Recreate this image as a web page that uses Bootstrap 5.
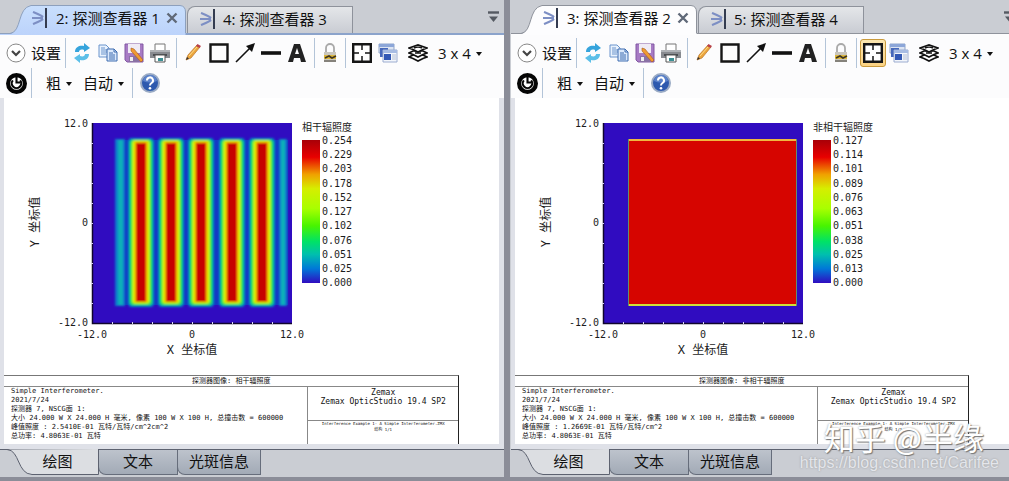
<!DOCTYPE html>
<html lang="zh-CN">
<head>
<meta charset="utf-8">
<meta name="viewport" content="width=device-width, initial-scale=1">
<title>探测查看器</title>
<link href="https://cdn.jsdelivr.net/npm/bootstrap@5.3.0/dist/css/bootstrap.min.css" rel="stylesheet">
<style>
body{background:#8b8d98;color:#111;font-family:"Open Sans","Noto Sans CJK SC",sans-serif;font-size:15px;line-height:20px}
.workspace{display:grid;grid-template-columns:504fr 499fr;gap:6px;min-height:100vh;padding-bottom:4px}
.viewer{background:#dfe1e8;min-width:0;overflow:hidden}
.viewer-right{border-left:1px solid #cacdd3}
button{background:none;border:0;padding:0;color:inherit;white-space:nowrap}
.tabstrip{height:35px;background:#cacdd3;border-bottom:1px solid #8f939c;padding-left:10px}
.viewer-left .tabstrip{border-bottom:2px solid #8ba3cb}
.viewer-right .tabstrip{margin-right:-6px;height:34px}
.viewer-right .tools{padding-top:1px}
.toptab{position:relative;height:27px;padding-left:22px;padding-bottom:2px}
.toptab.active{width:176px;height:28px}
.toptab.active .tabshape{position:absolute;left:-10px;top:0}
.toptab>*{position:relative}
.toptab.other{width:166px;margin-left:1px;padding-left:12px;border:1px solid #8e929b;border-bottom:0;border-radius:8px 0 0 0;background:linear-gradient(#e4e6e9,#c9ccd3)}
.tabname{margin-left:7px}
.closer{margin-left:6px;width:12px;height:20px}
.overflow-btn{margin-right:5px;margin-bottom:10px}
.tools{background:#fcfcfd}
.toolrow{height:35px;padding-left:6px}
.toolrow.second{height:28px;padding-bottom:2px}
.tool{width:26px;height:28px;border:1px solid transparent;border-radius:3px;flex:none}
.tool.lock{width:24px}
.tool.on{background:linear-gradient(#fbe6b0,#fbd283);border-color:#c99a3c}
.sep{width:1px;height:30px;background:#b3c4d8;margin:0 3px;flex:none}
.lbl{margin-left:5px}
.menu-btn{margin-left:7px}
.weight-btn{margin-left:11px}
.arrow{display:inline-block;border:3px solid transparent;border-top:4px solid #111;border-bottom:0;margin-left:5px;vertical-align:3px}
.sheet{background:#fff;margin:0 5px 5px 4px;display:flex;flex-direction:column;justify-content:space-between}
.viewer-right .sheet{margin-right:0}
.chart text{font-family:"DejaVu Sans Mono","Noto Sans CJK SC",monospace;font-size:10px;fill:#1c1c1c}
.chart .axisname{font-size:12px}
.chart .end{text-anchor:end}
.chart .mid{text-anchor:middle}
.titleblock{width:92%;border-top:1px solid #777;border-right:1px solid #222;font:7px/9px "DejaVu Sans Mono","Noto Sans CJK SC",monospace;color:#111;white-space:nowrap}
.tb-title{text-align:center;height:11px;line-height:10px;border-bottom:1px solid #888}
.tb-cols{display:grid;grid-template-columns:2fr 1fr;height:57px}
.tb-left{padding-left:7px;overflow:hidden}
.tb-right{border-left:1px solid #888;text-align:center}
.tb-product{height:34px;font-size:8px;border-bottom:1px solid #888;padding-top:1px}
.tb-file{font-size:4px;line-height:6px}
.bottomtabs{height:28px;background:#cacdd3;border-top:1px solid #5d6270}
.bt{height:25px;border:1px solid #666d7b;border-top:0;border-radius:0 0 0 8px;background:linear-gradient(#bdc3cc,#a2aab6);width:80px;margin-left:-1px}
.bt.wide{width:84px}
.bt.active{position:relative;background:none;border:0;width:99px;margin:-1px 0 0;height:26px;padding-left:16px}
.bt.active svg{position:absolute;left:0;top:0}
.bt span{position:relative;top:-1px}
.watermark{position:absolute;right:10px;bottom:9px;text-align:right;color:#fff;pointer-events:none}
.wm-name{font:31px/34px "Noto Sans CJK SC",sans-serif;padding-right:15px;text-shadow:1px 1px 1px #777,0 0 2px #999}
.wm-url{font:16px/18px "Liberation Sans",sans-serif;color:#e4e6eb;text-shadow:0 0 2px #999}
</style>
</head>
<body>
<svg width="0" height="0" class="position-absolute" aria-hidden="true">
<defs>
<linearGradient id="blueTab" x2="0" y2="1"><stop stop-color="#c9dffd"/><stop offset="1" stop-color="#bcd3fb"/></linearGradient>
<linearGradient id="scale" x2="0" y2="1"><stop stop-color="#a80008"/><stop offset=".12" stop-color="#e80000"/><stop offset=".24" stop-color="#f0a000"/><stop offset=".34" stop-color="#d6ee00"/><stop offset=".48" stop-color="#a8ff00"/><stop offset=".6" stop-color="#48f400"/><stop offset=".71" stop-color="#00e266"/><stop offset=".8" stop-color="#00bfae"/><stop offset=".9" stop-color="#0078d8"/><stop offset="1" stop-color="#300cc0"/></linearGradient>
<filter id="soft" x="-10%" y="-3%" width="120%" height="106%"><feGaussianBlur stdDeviation=".8"/></filter>
<symbol id="detector" viewBox="0 0 16 20"><path d="M1 4C6 6 9 7 11 9M0 10H11M1 16C6 14 9 13 11 11" fill="none" stroke="#7d8fc4" stroke-width="2"/><path d="M14 0V20" stroke="#343c50" stroke-width="2"/></symbol>
<symbol id="chev" viewBox="0 0 20 20"><circle cx="10" cy="10" r="9" fill="#fff" stroke="#888"/><path d="M6 8l4 4 4-4" fill="none" stroke="#444" stroke-width="2.2"/></symbol>
<symbol id="refresh" viewBox="0 0 20 20"><path d="M3 9C3 3 9 2 12 3V0l6 5-6 4V7C9 6 7 7 7 9z" fill="#36a4dc"/><path d="M17 11c0 6-6 7-9 6v3l-6-5 6-4v2c3 1 5 0 5-2z" fill="#5cbfe8"/></symbol>
<symbol id="copy" viewBox="0 0 20 20"><path d="M1 2h7l3 3v9H1z" fill="#e9f2fd" stroke="#6a94cc"/><path d="M3 5h4M3 7h6M3 9h6M3 11h5" stroke="#6a94cc"/><path d="M9 6h7l3 3v9H9z" fill="#dbe9fb" stroke="#3f6db0"/><path d="M16 6v3h3M11 10h4M11 12h6M11 14h6M11 16h6" fill="none" stroke="#3f6db0"/></symbol>
<symbol id="save" viewBox="0 0 20 20"><path d="M1 1h18v18H3l-2-2z" fill="#a77bc4" stroke="#8259a3"/><path d="M4 1h12v9H4z" fill="#f0ebf5"/><path d="M5 13h10v6H5z" fill="#8a72a5"/><path d="M6 14h3v4H6z" fill="#eee"/><path d="M7 5l3 1 9 11-2 2L7 8z" fill="#ef9b31" stroke="#a85a1a" stroke-width=".6"/></symbol>
<symbol id="printer" viewBox="0 0 20 20"><path d="M5 1h10v7H5z" fill="#fff" stroke="#777"/><path d="M0 7h20v8H0z" fill="#888b90"/><path d="M0 7h20v2H0z" fill="#b0b3b7"/><path d="M3 11h14v2H3z" fill="#4b4e53"/><path d="M5 12h10v7H5z" fill="#fff" stroke="#555"/><path d="M8 15h5v3H8z" fill="#3b8f94"/></symbol>
<symbol id="pencil" viewBox="0 0 20 20"><path d="M3 17l2-5L14 2l3 2-9 11z" fill="#eba63d" stroke="#b9732a" stroke-width=".7"/><path d="M13 3l1.500-2 3.500 2-1.500 2z" fill="#b8424c"/><path d="M3 17l1-3 2 1.500z" fill="#333"/><path d="M6 13l8-9" stroke="#ffdc8c"/></symbol>
<symbol id="box" viewBox="0 0 20 20"><path d="M1.500 1.500h17v17h-17z" fill="none" stroke="#151515" stroke-width="2.400"/></symbol>
<symbol id="arrowic" viewBox="0 0 20 20"><path d="M1 19L16 4" stroke="#111" stroke-width="1.600"/><path d="M20 0l-3 9-6-6z" fill="#111"/></symbol>
<symbol id="lineic" viewBox="0 0 20 20"><path d="M0 10h20" stroke="#111" stroke-width="3.600"/></symbol>
<symbol id="bold" viewBox="0 0 20 20"><path d="M1 19L7 1h6l6 18h-5l-1-4H7l-1 4zM8 11h4L10 5z" fill="#222" fill-rule="evenodd"/></symbol>
<symbol id="lockic" viewBox="0 0 20 20"><path d="M6 11V5a4 4 0 0 1 8 0v6" fill="none" stroke="#a9a9a9" stroke-width="1.800"/><path d="M4 9h12v10H4z" fill="#c9c6bd"/><path d="M4 12h12v4H4z" fill="#ddb83d"/><path d="M5 15l4-2 3 2 4-2" fill="none" stroke="#3d3420" stroke-width="1.600"/><path d="M4 18h12" stroke="#85827b" stroke-width="2"/></symbol>
<symbol id="target" viewBox="0 0 20 20"><path d="M1.200 1.200h17.600v17.600H1.200z" fill="#fff" stroke="#151515" stroke-width="2.400"/><path d="M10 2v5M10 13v5M2 10h5M13 10h5" stroke="#151515" stroke-width="1.500"/></symbol>
<symbol id="windows" viewBox="0 0 20 20"><path d="M1 1h15v9H1z" fill="#dce4f2" stroke="#8fa4c8"/><path d="M1 1h15v3H1z" fill="#8ca6d8"/><path d="M2 5h8v9H2z" fill="#4668bb"/><path d="M5 7h14v12H5z" fill="#f3f6fb" stroke="#9bacd0"/><path d="M5 7h14v3H5z" fill="#a7bce3"/><path d="M6 11h7v6H6z" fill="#3359b5"/><path d="M14 12h4M14 14h4M14 16h4" stroke="#b4bfd4"/></symbol>
<symbol id="layers" viewBox="0 0 20 20"><g fill="#fff" stroke="#111" stroke-width="1.700"><path d="M1 14l4-2h10l4 2-4 1.500L10 18l-5-2.500z"/><path d="M1 10l4-2h10l4 2-4 1.500L10 14l-5-2.500z"/><path d="M1 5l9-3 9 3-4 1.500L10 9 5 6.500z"/><path d="M6 5c2-1 6-1 8 0M7 10h6"/></g></symbol>
<symbol id="cycle" viewBox="0 0 20 20"><circle cx="10" cy="10" r="8" fill="#fff" stroke="#050505" stroke-width="4"/><path d="M6.500 7a4.500 4.500 0 1 0 7 0" fill="none" stroke="#050505" stroke-width="2"/><path d="M10 2v8M10 9h4" stroke="#050505" stroke-width="2"/></symbol>
<symbol id="help" viewBox="0 0 20 20"><circle cx="10" cy="10" r="9" fill="#2d59ae" stroke="#9aabc5" stroke-width="2"/><path d="M3 8a7 6 0 0 1 14 0q-7 3-14 0z" fill="#799fdd" opacity=".6"/><path d="M7 7.500a3 3 0 1 1 4.500 2.500Q10 11 10 12.500" fill="none" stroke="#fff" stroke-width="2"/><circle cx="10" cy="15.300" r="1.300" fill="#fff"/></symbol>
<symbol id="more" viewBox="0 0 11 12"><path d="M0 1.500h11" stroke="#555a62" stroke-width="2.400"/><path d="M1 5.500h9L5.500 11z" fill="#555a62"/></symbol>
<symbol id="cross" viewBox="0 0 12 12"><path d="M1.500 1.500l9 9m0-9l-9 9" stroke="#606978" stroke-width="2.400"/></symbol>
<g id="fringe"><rect x="-13" y="40" width="26" height="169" rx="4" fill="#0878cc"/><rect x="-12" y="41" width="24" height="167" rx="4" fill="#00b8a0"/><rect x="-11" y="42" width="22" height="165" rx="4" fill="#18e050"/><rect x="-9" y="42" width="18" height="164" rx="3" fill="#90f800"/><rect x="-8" y="43" width="16" height="162" rx="2" fill="#e0f000"/><rect x="-6" y="44" width="12" height="160" fill="#f09000"/><rect x="-5" y="45" width="10" height="159" fill="#de2000"/><rect x="-4" y="45" width="8" height="158" fill="#c60000"/></g>
<g id="axes"><path d="M88.500 25V225.500H288" fill="none" stroke="#10052e" stroke-width="1.500"/><path d="M108.500 224v2m20-2v2m20-2v2m20-2v2m20-2v2m20-2v2m20-2v2m20-2v2m20-2v2M87 45.500h2m-2 20h2m-2 20h2m-2 20h2m-2 20h2m-2 20h2m-2 20h2m-2 20h2m-2 20h2" stroke="#d8d4f0"/></g>
<symbol id="slant" viewBox="0 0 99 26"><path d="M0 .5H7C20 1 17 25 32 25.500H98.500V0" fill="#dcdee2"/><path d="M0 .5H7C20 1 17 25 32 25.500H98.500V0" fill="none" stroke="#5d6270"/></symbol>
</defs>
</svg>

<main class="workspace">
<section class="viewer viewer-left d-flex flex-column">
  <nav class="tabstrip d-flex align-items-end" aria-label="查看器">
    <div class="toptab active d-flex align-items-center">
      <svg class="tabshape" width="186" height="30"><path d="M0 29H10C22 27 17 3 31 .5H180Q185.500 1 185.500 7V30H0z" fill="url(#blueTab)"/><path d="M0 28.500H10C22 27 17 3 31 .5H180Q185.500 1 185.500 7V28" fill="none" stroke="#8da0bd"/></svg>
      <svg width="16" height="20"><use href="#detector"/></svg><button class="tabname ms-2">2: 探测查看器 1</button><button class="closer d-flex align-items-center" aria-label="关闭"><svg width="12" height="12"><use href="#cross"/></svg></button>
    </div>
    <div class="toptab other d-flex align-items-center"><svg width="16" height="20"><use href="#detector"/></svg><button class="tabname">4: 探测查看器 3</button></div>
    <button class="overflow-btn ms-auto d-flex" aria-label="更多"><svg width="11" height="12"><use href="#more"/></svg></button>
  </nav>
  <div class="tools">
    <div class="toolrow d-flex align-items-center">
      <button class="d-flex align-items-center"><svg width="20" height="20"><use href="#chev"/></svg><span class="lbl">设置</span></button>
      <i class="sep ms-1"></i>
      <button class="tool" aria-label="刷新"><svg width="20" height="20"><use href="#refresh"/></svg></button><button class="tool" aria-label="复制"><svg width="20" height="20"><use href="#copy"/></svg></button><button class="tool" aria-label="保存"><svg width="20" height="20"><use href="#save"/></svg></button><button class="tool" aria-label="打印"><svg width="20" height="20"><use href="#printer"/></svg></button>
      <i class="sep"></i>
      <button class="tool" aria-label="铅笔"><svg width="20" height="20"><use href="#pencil"/></svg></button><button class="tool" aria-label="矩形"><svg width="20" height="20"><use href="#box"/></svg></button><button class="tool" aria-label="箭头"><svg width="20" height="20"><use href="#arrowic"/></svg></button><button class="tool" aria-label="直线"><svg width="20" height="20"><use href="#lineic"/></svg></button><button class="tool" aria-label="文字"><svg width="20" height="20"><use href="#bold"/></svg></button>
      <i class="sep ms-1"></i>
      <button class="tool lock" aria-label="锁定"><svg width="20" height="20"><use href="#lockic"/></svg></button>
      <i class="sep"></i>
      <button class="tool" aria-label="适合窗口"><svg width="20" height="20"><use href="#target"/></svg></button><button class="tool" aria-label="窗口"><svg width="20" height="20"><use href="#windows"/></svg></button><button class="tool ms-1" aria-label="图层"><svg width="20" height="20"><use href="#layers"/></svg></button>
      <button class="menu-btn">3 x 4<i class="arrow"></i></button>
    </div>
    <div class="toolrow second d-flex align-items-center">
      <button class="d-flex" aria-label="自动更新"><svg width="21" height="21"><use href="#cycle"/></svg></button>
      <i class="sep ms-1"></i>
      <button class="weight-btn">粗<i class="arrow"></i></button><button class="weight-btn">自动<i class="arrow"></i></button>
      <i class="sep ms-2"></i>
      <button class="d-flex ms-1" aria-label="帮助"><svg width="20" height="20"><use href="#help"/></svg></button>
    </div>
  </div>
  <div class="sheet flex-grow-1">
    <svg class="chart" width="400" height="270" role="img" aria-label="相干辐照度">
      <rect x="88" y="25" width="200" height="200" fill="#300cc0"/>
      <rect x="112" y="42" width="172" height="165" fill="#1438c4"/>
      <g filter="url(#soft)"><rect x="111" y="41" width="10" height="167" fill="#0878cc"/><rect x="114" y="42" width="5" height="165" fill="#08b0b8"/><rect x="275" y="41" width="8" height="167" fill="#0878cc"/><rect x="277" y="42" width="4" height="165" fill="#08b0b8"/>
      <use href="#fringe" x="137"/><use href="#fringe" x="167"/><use href="#fringe" x="197"/><use href="#fringe" x="228"/><use href="#fringe" x="258"/></g>
      <use href="#axes"/>
      <rect x="298" y="42" width="18" height="143" fill="url(#scale)"/>
      <text class="end" x="84" y="29">12.0</text><text class="end" x="84" y="128">0</text><text class="end" x="84" y="228">-12.0</text>
      <text class="mid" x="88" y="240">-12.0</text><text class="mid" x="188" y="240">0</text><text class="mid" x="288" y="240">12.0</text>
      <text class="axisname mid" x="188" y="256">X 坐标值</text><text class="axisname mid" transform="translate(35 124) rotate(-90)">Y 坐标值</text>
      <text x="298" y="33">相干辐照度</text>
      <text x="318" y="46">0.254</text><text x="318" y="60">0.229</text><text x="318" y="74">0.203</text><text x="318" y="89">0.178</text><text x="318" y="103">0.152</text><text x="318" y="117">0.127</text><text x="318" y="131">0.102</text><text x="318" y="146">0.076</text><text x="318" y="160">0.051</text><text x="318" y="174">0.025</text><text x="318" y="188">0.000</text>
    </svg>
    <div class="titleblock">
      <div class="tb-title">探测器图像: 相干辐照度</div>
      <div class="tb-cols">
        <div class="tb-left"><div>Simple Interferometer.</div><div>2021/7/24</div><div>探测器 7, NSCG面 1:</div><div>大小 24.000 W X 24.000 H 毫米, 像素 100 W X 100 H, 总撞击数 = 600000</div><div>峰值照度 : 2.5410E-01 瓦特/瓦特/cm^2cm^2</div><div>总功率: 4.8063E-01 瓦特</div></div>
        <div class="tb-right"><div class="tb-product"><div>Zemax</div><div>Zemax OpticStudio 19.4 SP2</div></div><div class="tb-file"><div>Interference Example 1- A Simple Interferometer.ZMX</div><div>结构 1/1</div></div></div>
      </div>
    </div>
  </div>
  <nav class="bottomtabs d-flex" aria-label="视图"><button class="bt active"><svg width="99" height="26"><use href="#slant"/></svg><span>绘图</span></button><button class="bt"><span>文本</span></button><button class="bt wide"><span>光斑信息</span></button></nav>
</section>

<section class="viewer viewer-right d-flex flex-column">
  <nav class="tabstrip d-flex align-items-end" aria-label="查看器">
    <div class="toptab active d-flex align-items-center">
      <svg class="tabshape" width="186" height="30"><path d="M0 29H10C22 27 17 3 31 .5H180Q185.500 1 185.500 7V30H0z" fill="#fdfdfe"/><path d="M0 28.500H10C22 27 17 3 31 .5H180Q185.500 1 185.500 7V28" fill="none" stroke="#8e929b"/></svg>
      <svg width="16" height="20"><use href="#detector"/></svg><button class="tabname ms-2">3: 探测查看器 2</button><button class="closer d-flex align-items-center" aria-label="关闭"><svg width="12" height="12"><use href="#cross"/></svg></button>
    </div>
    <div class="toptab other d-flex align-items-center"><svg width="16" height="20"><use href="#detector"/></svg><button class="tabname">5: 探测查看器 4</button></div>
    <button class="overflow-btn me-0 ms-auto d-flex" aria-label="更多"><svg width="11" height="12"><use href="#more"/></svg></button>
  </nav>
  <div class="tools">
    <div class="toolrow d-flex align-items-center">
      <button class="d-flex align-items-center"><svg width="20" height="20"><use href="#chev"/></svg><span class="lbl">设置</span></button>
      <i class="sep ms-1"></i>
      <button class="tool" aria-label="刷新"><svg width="20" height="20"><use href="#refresh"/></svg></button><button class="tool" aria-label="复制"><svg width="20" height="20"><use href="#copy"/></svg></button><button class="tool" aria-label="保存"><svg width="20" height="20"><use href="#save"/></svg></button><button class="tool" aria-label="打印"><svg width="20" height="20"><use href="#printer"/></svg></button>
      <i class="sep"></i>
      <button class="tool" aria-label="铅笔"><svg width="20" height="20"><use href="#pencil"/></svg></button><button class="tool" aria-label="矩形"><svg width="20" height="20"><use href="#box"/></svg></button><button class="tool" aria-label="箭头"><svg width="20" height="20"><use href="#arrowic"/></svg></button><button class="tool" aria-label="直线"><svg width="20" height="20"><use href="#lineic"/></svg></button><button class="tool" aria-label="文字"><svg width="20" height="20"><use href="#bold"/></svg></button>
      <i class="sep ms-1"></i>
      <button class="tool lock" aria-label="锁定"><svg width="20" height="20"><use href="#lockic"/></svg></button>
      <i class="sep"></i>
      <button class="tool on" aria-label="适合窗口" aria-pressed="true"><svg width="20" height="20"><use href="#target"/></svg></button><button class="tool" aria-label="窗口"><svg width="20" height="20"><use href="#windows"/></svg></button><button class="tool ms-1" aria-label="图层"><svg width="20" height="20"><use href="#layers"/></svg></button>
      <button class="menu-btn">3 x 4<i class="arrow"></i></button>
    </div>
    <div class="toolrow second d-flex align-items-center">
      <button class="d-flex" aria-label="自动更新"><svg width="21" height="21"><use href="#cycle"/></svg></button>
      <i class="sep ms-1"></i>
      <button class="weight-btn">粗<i class="arrow"></i></button><button class="weight-btn">自动<i class="arrow"></i></button>
      <i class="sep ms-2"></i>
      <button class="d-flex ms-1" aria-label="帮助"><svg width="20" height="20"><use href="#help"/></svg></button>
    </div>
  </div>
  <div class="sheet flex-grow-1">
    <svg class="chart" width="400" height="270" role="img" aria-label="非相干辐照度">
      <rect x="88" y="25" width="200" height="200" fill="#300cc0"/>
      <rect x="113" y="41" width="169" height="167" fill="#648c70"/>
      <rect x="114" y="41" width="167" height="2" fill="#f0b840"/><rect x="114" y="206" width="167" height="2" fill="#d0e038"/>
      <rect x="114" y="43" width="167" height="163" fill="#d60500"/>
      <use href="#axes"/>
      <rect x="298" y="42" width="18" height="143" fill="url(#scale)"/>
      <text class="end" x="84" y="29">12.0</text><text class="end" x="84" y="128">0</text><text class="end" x="84" y="228">-12.0</text>
      <text class="mid" x="88" y="240">-12.0</text><text class="mid" x="188" y="240">0</text><text class="mid" x="288" y="240">12.0</text>
      <text class="axisname mid" x="188" y="256">X 坐标值</text><text class="axisname mid" transform="translate(35 124) rotate(-90)">Y 坐标值</text>
      <text x="298" y="33">非相干辐照度</text>
      <text x="318" y="46">0.127</text><text x="318" y="60">0.114</text><text x="318" y="74">0.101</text><text x="318" y="89">0.089</text><text x="318" y="103">0.076</text><text x="318" y="117">0.063</text><text x="318" y="131">0.051</text><text x="318" y="146">0.038</text><text x="318" y="160">0.025</text><text x="318" y="174">0.013</text><text x="318" y="188">0.000</text>
    </svg>
    <div class="titleblock">
      <div class="tb-title">探测器图像: 非相干辐照度</div>
      <div class="tb-cols">
        <div class="tb-left"><div>Simple Interferometer.</div><div>2021/7/24</div><div>探测器 7, NSCG面 1:</div><div>大小 24.000 W X 24.000 H 毫米, 像素 100 W X 100 H, 总撞击数 = 600000</div><div>峰值照度 : 1.2669E-01 瓦特/瓦特/cm^2</div><div>总功率: 4.8063E-01 瓦特</div></div>
        <div class="tb-right"><div class="tb-product"><div>Zemax</div><div>Zemax OpticStudio 19.4 SP2</div></div><div class="tb-file"><div>Interference Example 1- A Simple Interferometer.ZMX</div><div>结构 1/1</div></div></div>
      </div>
    </div>
  </div>
  <nav class="bottomtabs d-flex" aria-label="视图"><button class="bt active"><svg width="99" height="26"><use href="#slant"/></svg><span>绘图</span></button><button class="bt"><span>文本</span></button><button class="bt wide"><span>光斑信息</span></button></nav>
</section>
</main>
<div class="watermark"><div class="wm-name">知乎 @半缘</div><div class="wm-url">https://blog.csdn.net/Carifee</div></div>
<script src="https://cdn.jsdelivr.net/npm/bootstrap@5.3.0/dist/js/bootstrap.bundle.min.js"></script>
</body>
</html>
